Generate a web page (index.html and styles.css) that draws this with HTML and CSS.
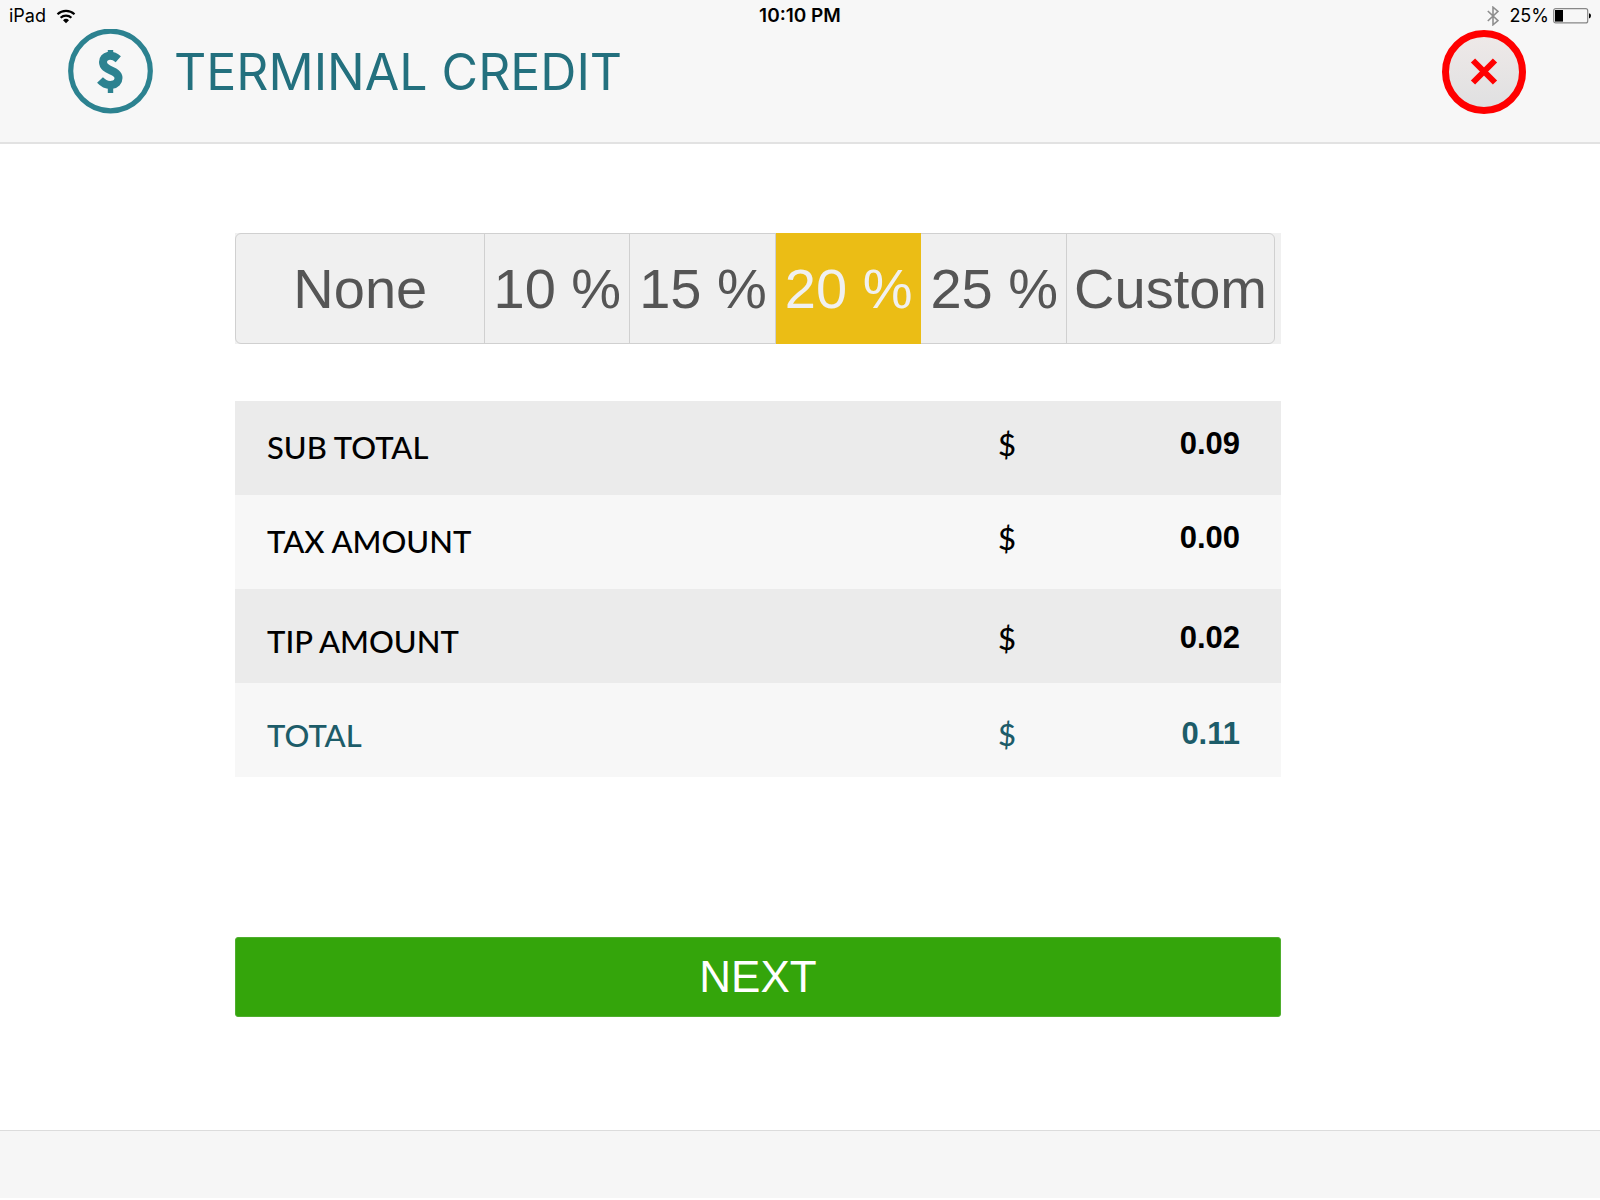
FILE: index.html
```html
<!DOCTYPE html>
<html lang="en">
  <head>
    <meta charset="UTF-8" />
    <meta name="viewport" content="width=device-width, initial-scale=1.0" />
    <title>Terminal Credit</title>
    <link rel="stylesheet" href="styles.css">
  </head>
  <body>
    <header>
      <div class="status-bar">
        <div class="status-left">
          <span>iPad</span>
          <svg class="wifi" viewBox="0 0 20 15" aria-hidden="true">
            <path d="M1.5 5.3a12.5 12.5 0 0 1 17 0M4.6 8.7a8 8 0 0 1 10.8 0" fill="none" stroke="#000" stroke-width="2.2" />
            <path d="M10 14.2l-3-3a4.4 4.4 0 0 1 6 0z" />
          </svg>
        </div>
        <span class="time">10:10 PM</span>
        <div class="status-right">
          <svg class="bluetooth" viewBox="0 0 12 20" aria-hidden="true">
            <path d="M.8 5l10.2 9.6-5 4.2V1.2l5 4.2L.8 15" fill="none" stroke="#8e8e8e" stroke-width="1.6" />
          </svg>
          <span>25%</span>
          <svg class="battery" viewBox="0 0 38 16" aria-hidden="true">
            <rect x=".7" y=".7" width="34" height="14.2" rx="2" fill="none" stroke="#888" stroke-width="1.2" />
            <rect x="2" y="2" width="8" height="11.6" />
            <path d="M36 5.2q2 .3 2 2.6t-2 2.6z" />
          </svg>
        </div>
      </div>
      <div class="title-bar">
        <svg class="logo" viewBox="0 0 85 85" aria-hidden="true">
          <circle cx="42.5" cy="42" r="39.8" fill="none" stroke="#2c8290" stroke-width="5.2" />
          <path d="M50.300 30.300C43.500 24.500 35 26.500 35 33C35 42.500 50.500 40.500 50.500 49C50.500 56.500 39.500 59 32 51" fill="none" stroke="#2c8290" stroke-width="8" />
          <path d="M39.800 21h5.400v6h-5.400zM39.800 56h5.400v8h-5.400z" fill="#2c8290" />
        </svg>
        <h1>TERMINAL CREDIT</h1>
        <button type="button" class="close" aria-label="Close">
          <svg viewBox="0 0 28 28" aria-hidden="true">
            <path d="M3 2.500l22 22M25 2.500L3 24.500" fill="none" stroke="#f00" stroke-width="6" />
          </svg>
        </button>
      </div>
    </header>

    <main>
      <form id="tipForm">
        <fieldset class="tips">
          <div class="tip-options">
            <label class="tip wide"><input type="radio" name="tip" value="0" />None</label>
            <label class="tip"><input type="radio" name="tip" value="10" />10 %</label>
            <label class="tip"><input type="radio" name="tip" value="15" />15 %</label>
            <label class="tip"><input type="radio" name="tip" value="20" checked />20 %</label>
            <label class="tip"><input type="radio" name="tip" value="25" />25 %</label>
            <label class="tip"><input type="radio" name="tip" value="custom" />Custom</label>
          </div>
        </fieldset>

        <table class="amounts">
          <tr>
            <th scope="row">SUB TOTAL</th>
            <td class="currency">$</td>
            <td class="value">0.09</td>
          </tr>
          <tr>
            <th scope="row">TAX AMOUNT</th>
            <td class="currency">$</td>
            <td class="value">0.00</td>
          </tr>
          <tr class="low">
            <th scope="row">TIP AMOUNT</th>
            <td class="currency">$</td>
            <td class="value">0.02</td>
          </tr>
          <tr class="low total">
            <th scope="row">TOTAL</th>
            <td class="currency">$</td>
            <td class="value">0.11</td>
          </tr>
        </table>

        <button type="submit" class="next">NEXT</button>
      </form>
    </main>

    <footer></footer>
  </body>
</html>
```

FILE: styles.css
```css
:root {
  --bar-color: #f7f7f7;
  --line-color: #dcdcdc;
  --title-color: #23707e;
  --total-color: #1d5c69;
  --tip-color: #ebbd15;
  --next-color: #34a50b;
}

* {
  box-sizing: border-box;
  margin: 0;
  padding: 0;
}

body {
  display: flex;
  flex-direction: column;
  min-height: 100vh;
  padding-bottom: 2px;
  font-family: "Liberation Sans", Arial, sans-serif;
  color: #000;
  background-color: #fff;
}

header {
  height: 144px;
  background-color: var(--bar-color);
  border-bottom: 2px solid #e2e2e2;
}

.status-bar {
  display: grid;
  grid-template-columns: 1fr auto 1fr;
  height: 29px;
  padding: 0 9px;
  font-family: Inter, sans-serif;
  font-size: 18px;
  line-height: 32px;
}

.status-left,
.status-right {
  display: flex;
  align-items: center;
  height: 32px;
  gap: 10px;
}

.status-right {
  justify-content: flex-end;
}

.time {
  font-size: 19px;
  font-weight: 600;
}

.wifi {
  width: 20px;
  height: 15px;
}

.bluetooth {
  width: 12px;
  height: 20px;
}

.battery {
  width: 38px;
  height: 16px;
  margin-left: -6px;
}

.title-bar {
  display: flex;
  align-items: center;
  padding: 0 74px 0 68px;
}

.logo {
  width: 85px;
  height: 85px;
  margin-right: 21px;
}

h1 {
  font-family: Inter, sans-serif;
  font-size: 50px;
  font-weight: 400;
  line-height: 64px;
  color: var(--title-color);
}

.close {
  display: flex;
  align-items: center;
  justify-content: center;
  width: 84px;
  height: 84px;
  margin-left: auto;
  border: 7px solid #f00;
  border-radius: 50%;
  background: linear-gradient(#eee9e8, #e0e0e1);
  cursor: pointer;
}

.close svg {
  width: 28px;
  height: 28px;
}

main {
  flex: 1;
  padding: 89px 319px 0 235px;
}

.tips {
  padding-right: 6px;
  border: none;
  background-color: #f0f0f0;
}

.tip-options {
  display: flex;
  height: 111px;
  border: 1px solid #d0d0d0;
  border-radius: 6px;
}

.tip {
  display: flex;
  align-items: center;
  justify-content: center;
  padding: 0 8px 0 9px;
  border-right: 1px solid #d0d0d0;
  font-size: 56px;
  color: #555;
  white-space: nowrap;
  cursor: pointer;
}

.tip:last-child {
  padding: 0 7px;
  border-right: none;
}

.tip.wide {
  flex: 1;
}

.tip input {
  position: absolute;
  opacity: 0;
}

.tip:has(:checked) {
  margin: -1px 0;
  border-color: var(--tip-color);
  color: #f0f0f0;
  background-color: var(--tip-color);
}

.amounts {
  width: 100%;
  margin-top: 57px;
  border-collapse: collapse;
  font-size: 31px;
  line-height: 36px;
}

.amounts tr {
  height: 94px;
  background-color: #f7f7f7;
}

.amounts tr:nth-child(odd) {
  background-color: #ebebeb;
}

.amounts th,
.amounts td {
  padding-bottom: 8px;
}

.amounts th {
  padding: 0 0 2px 32px;
  font-family: Lato, sans-serif;
  font-weight: 500;
  text-align: left;
}

.amounts .currency {
  width: 20px;
  font-family: Lato, sans-serif;
  font-weight: 500;
}

.amounts .value {
  width: 263px;
  padding-right: 41px;
  font-weight: 700;
  text-align: right;
}

.amounts .low th,
.amounts .low td {
  padding-top: 12px;
}

.amounts .total td {
  padding-top: 16px;
}

.amounts .total {
  color: var(--total-color);
}

.next {
  display: block;
  width: 100%;
  height: 80px;
  margin-top: 160px;
  border: 1px solid #4fae2e;
  border-radius: 3px;
  font-family: "Liberation Sans", Arial, sans-serif;
  font-size: 44px;
  color: #fff;
  background-color: var(--next-color);
  cursor: pointer;
}

footer {
  height: 68px;
  border-top: 1px solid var(--line-color);
  background-color: #f6f6f6;
}
```
